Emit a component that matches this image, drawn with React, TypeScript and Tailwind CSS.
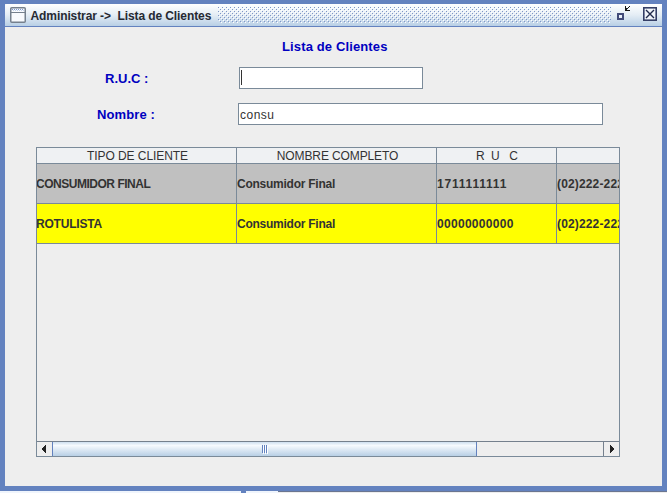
import React from 'react';

function Dots() {
  return (
    <svg className="h-[16px] flex-1" shapeRendering="crispEdges" aria-hidden="true">
      <defs>
        <pattern id="bumps" width="4" height="4" patternUnits="userSpaceOnUse">
          <rect x="0" y="0" width="1" height="1" fill="#7f96c6" />
          <rect x="1" y="1" width="1" height="1" fill="#ffffff" />
          <rect x="2" y="2" width="1" height="1" fill="#7f96c6" />
          <rect x="3" y="3" width="1" height="1" fill="#ffffff" />
        </pattern>
      </defs>
      <rect width="100%" height="100%" fill="url(#bumps)" />
    </svg>
  );
}

function TitleBar() {
  return (
    <header className="flex h-[23px] items-start rounded-tl-[2px] border-b border-[#6382bf] bg-gradient-to-b from-white via-[#e4edf5] to-[#b8cfe5] pt-[3px]">
      <svg className="ml-[5px] h-[16px] w-[16px] shrink-0" viewBox="0 0 16 16">
        <rect x="0.75" y="0.75" width="14.5" height="14.5" rx="1" fill="#f8fafd" stroke="#75808d" strokeWidth="1.5" />
        <path d="M1 5.5h14" stroke="#75808d" />
        <path d="M2 2.5h12" stroke="#7f9bd0" strokeDasharray="1 1" />
        <path d="M3 3.5h11" stroke="#c3d3ec" strokeDasharray="1 1" />
      </svg>
      <span className="ml-[4.5px] w-[187.5px] shrink-0 whitespace-pre text-[12px] font-bold leading-[18px] tracking-[-0.09px] text-[#262a33]">
        {'Administrar ->  Lista de Clientes'}
      </span>
      <Dots />
      <svg className="ml-[6px] mt-[-1px] h-[16px] w-[14px] shrink-0" viewBox="0 0 14 16" shapeRendering="crispEdges">
        <rect x="1" y="8" width="5" height="5" fill="#e8eff8" stroke="#414a78" strokeWidth="2" />
        <path d="M8 1h1v4h4v1H8zM9 4h1v1H9zM10 3h1v1h-1zM11 2h1v1h-1zM12 1h1v1h-1zM9 3h1v1H9z" fill="#161616" transform="translate(0 -1)" />
      </svg>
      <svg className="ml-[12px] mr-[5px] h-[14px] w-[14px] shrink-0" viewBox="0 0 14 14">
        <rect x="0.8" y="0.8" width="12.4" height="12.4" fill="#f1f5fa" stroke="#343e66" strokeWidth="1.6" />
        <path d="M3 3l8 8M11 3l-8 8" stroke="#202a4c" strokeWidth="1.4" />
      </svg>
    </header>
  );
}

const rows = [
  {
    bg: 'bg-[#c0c0c0]',
    tipo: 'CONSUMIDOR FINAL',
    tipoSpacing: 'tracking-[-0.48px]',
    nombre: 'Consumidor Final',
    ruc: '1711111111',
    rucSpacing: 'tracking-[0.8px]',
    tel: '(02)222-222',
  },
  {
    bg: 'bg-[#ffff00]',
    tipo: 'ROTULISTA',
    tipoSpacing: 'tracking-[-0.2px]',
    nombre: 'Consumidor Final',
    ruc: '00000000000',
    rucSpacing: 'tracking-[0.3px]',
    tel: '(02)222-222',
  },
];

function ScrollBar() {
  return (
    <div className="mt-auto flex h-[15px] border-t border-[#75808d]">
      <div className="flex w-[15px] items-center pl-[5px]">
        <svg className="h-[8px] w-[4px]" viewBox="0 0 4 8" shapeRendering="crispEdges">
          <path d="M3 0h1v8H3zM2 1h1v6H2zM1 2h1v4H1zM0 3h1v2H0z" fill="#222" />
        </svg>
      </div>
      <div className="flex w-[425px] items-center justify-center border-x border-[#6382bf] bg-gradient-to-b from-[#cfe0f0] via-[#f6fafe] via-25% to-[#b8cfe5]">
        <svg className="h-[9px] w-[6px]" viewBox="0 0 6 9" shapeRendering="crispEdges">
          <path d="M.5 0v8M2.5 0v8M4.5 0v8" stroke="#6382bf" />
          <path d="M1.5 1v8M3.5 1v8M5.5 1v8" stroke="#fff" />
        </svg>
      </div>
      <div className="flex-1" />
      <div className="flex w-[16px] items-center border-l border-[#75808d] pl-[6px]">
        <svg className="h-[8px] w-[4px]" viewBox="0 0 4 8" shapeRendering="crispEdges">
          <path d="M0 0h1v8H0zM1 1h1v6H1zM2 2h1v4H2zM3 3h1v2H3z" fill="#222" />
        </svg>
      </div>
    </div>
  );
}

function ClientTable() {
  return (
    <section className="ml-[31px] mt-[22px] flex h-[310px] w-[584px] flex-col overflow-hidden border border-[#7a8a99]">
      <div className="grid h-[16px] shrink-0 grid-cols-[200px_200px_120px_62px] border-b border-[#7a8a99] bg-[#eff1f3] text-center text-[12px] leading-[17px] text-[#333]">
        <div className="border-r border-[#7a8a99] pl-[2px] tracking-[-0.06px]">TIPO DE CLIENTE</div>
        <div className="border-r border-[#7a8a99] pl-[2px] tracking-[-0.12px]">NOMBRE COMPLETO</div>
        <div className="whitespace-pre border-r border-[#7a8a99] pl-px tracking-[-0.1px]">{'R  U   C'}</div>
        <div />
      </div>
      {rows.map((r) => (
        <div
          key={r.tipo}
          className={`${r.bg} grid h-[40px] shrink-0 grid-cols-[200px_200px_120px_62px] border-b border-[#7a8a99] text-[12px] font-bold leading-[40px] text-[#333]`}
        >
          <div className={`border-r border-[#7a8a99] ${r.tipoSpacing}`}>
            <span className="-ml-px">{r.tipo}</span>
          </div>
          <div className="border-r border-[#7a8a99] tracking-[-0.25px]">{r.nombre}</div>
          <div className={`border-r border-[#7a8a99] ${r.rucSpacing}`}>{r.ruc}</div>
          <div className="overflow-hidden whitespace-nowrap tracking-[0.15px]">{r.tel}</div>
        </div>
      ))}
      <ScrollBar />
    </section>
  );
}

export default function App() {
  return (
    <div className="flex h-[493px] w-[667px] flex-col overflow-hidden bg-[#6382bf] font-['Liberation_Sans',Arial,sans-serif]">
      <main className="flex h-[491px] shrink-0 flex-col border-x-[5px] border-b-[5px] border-t-[4px] border-[#6382bf] bg-[#eeeeee]">
        <TitleBar />
        <h1 className="ml-[277px] mt-[10px] h-[20px] whitespace-nowrap text-[13px] font-bold leading-[20px] tracking-[0.13px] text-[#0000c0]">
          Lista de Clientes
        </h1>
        <div className="mt-[10px] flex h-[22px]">
          <label className="ml-[100px] w-[134px] text-[13px] font-bold leading-[24px] text-[#0000c0]">R.U.C :</label>
          <div className="w-[184px] border border-[#7a8a99] bg-white px-px py-[2px]">
            <div className="h-[15px] w-px bg-[#333]" />
          </div>
        </div>
        <div className="mt-[14px] flex h-[22px]">
          <label className="ml-[92px] w-[141px] text-[13px] font-bold leading-[24px] tracking-[0.1px] text-[#0000c0]">Nombre :</label>
          <div className="w-[365px] border border-[#7a8a99] bg-white px-px text-[12px] leading-[22px] tracking-[0.5px] text-[#333]">
            consu
          </div>
        </div>
        <ClientTable />
      </main>
      <footer className="flex h-[2px]">
        <div className="w-[241px] bg-[#f0f5fc]" />
        <div className="w-[5px] bg-[#6382bf]" />
        <div className="w-[32px] bg-[#f0f5fc]" />
        <div className="w-[389px] border-t border-[#6b7690] bg-[#eeeeee]" />
      </footer>
    </div>
  );
}
